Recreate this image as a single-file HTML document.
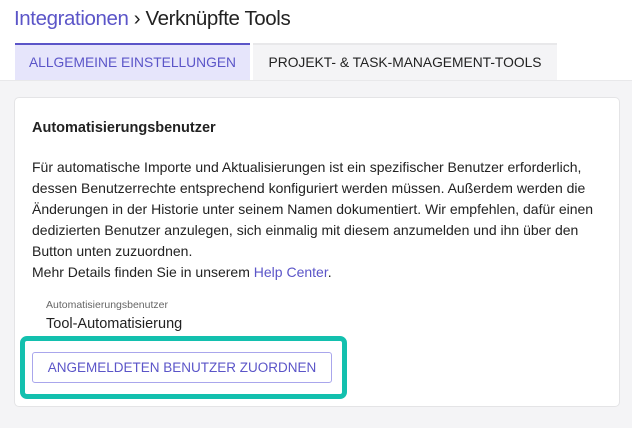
<!DOCTYPE html>
<html><head><style>
body{margin:0;width:632px;height:427px;background:#fff;font-family:"Liberation Sans",sans-serif;position:relative;overflow:hidden;color:#222}
.t{position:absolute;left:14px;top:7px;font-size:20.5px;letter-spacing:-0.4px}
.t span{color:#5b55c8}
.tab{position:absolute;top:43px;height:37px;font-size:13.8px;text-align:center;box-sizing:border-box}
.t1{left:15px;width:235px;background:#e6e5fb;color:#5b55c8;border-top:2px solid #5b55c8;line-height:36px}
.t2{left:253px;width:304px;background:#f4f4f6;border-top:2px solid #e8e8ea;line-height:36px;color:#222}
.bg{position:absolute;left:0;top:80px;width:632px;height:347px;background:#f4f4f6;border-top:1px solid #e8e8ea}
.card{position:absolute;left:14px;top:97px;width:606px;height:310px;background:#fff;border:1px solid #e4e4e6;border-radius:5px;box-sizing:border-box}
h3{position:absolute;left:17px;top:22px;margin:0;font-size:14.5px;font-weight:bold}
p{position:absolute;left:17px;top:59px;width:580px;margin:0;font-size:14px;line-height:21px}
p a{color:#5b55c8}
.lab{position:absolute;left:31px;top:201px;font-size:10.5px;color:#666}
.val{position:absolute;left:31px;top:218px;font-size:14.5px}
.hl{position:absolute;left:5px;top:238px;width:327px;height:63px;border:5px solid #13c0ae;border-radius:7px;box-sizing:border-box}
.btn{position:absolute;left:17px;top:254px;width:300px;height:31px;border:1px solid #a9a6ec;border-radius:3px;box-sizing:border-box;text-align:center;line-height:29px;font-size:13.5px;color:#5b55c8}
</style></head><body>
<div class="t"><span>Integrationen</span> › Verknüpfte Tools</div>
<div class="bg"></div>
<div class="tab t1">ALLGEMEINE EINSTELLUNGEN</div>
<div class="tab t2">PROJEKT- &amp; TASK-MANAGEMENT-TOOLS</div>
<div class="card">
<h3>Automatisierungsbenutzer</h3>
<p>Für automatische Importe und Aktualisierungen ist ein spezifischer Benutzer erforderlich, dessen Benutzerrechte entsprechend konfiguriert werden müssen. Außerdem werden die Änderungen in der Historie unter seinem Namen dokumentiert. Wir empfehlen, dafür einen dedizierten Benutzer anzulegen, sich einmalig mit diesem anzumelden und ihn über den Button unten zuzuordnen.<br>Mehr Details finden Sie in unserem <a>Help Center</a>.</p>
<div class="lab">Automatisierungsbenutzer</div>
<div class="val">Tool-Automatisierung</div>
<div class="hl"></div>
<div class="btn">ANGEMELDETEN BENUTZER ZUORDNEN</div>
</div>
</body></html>
